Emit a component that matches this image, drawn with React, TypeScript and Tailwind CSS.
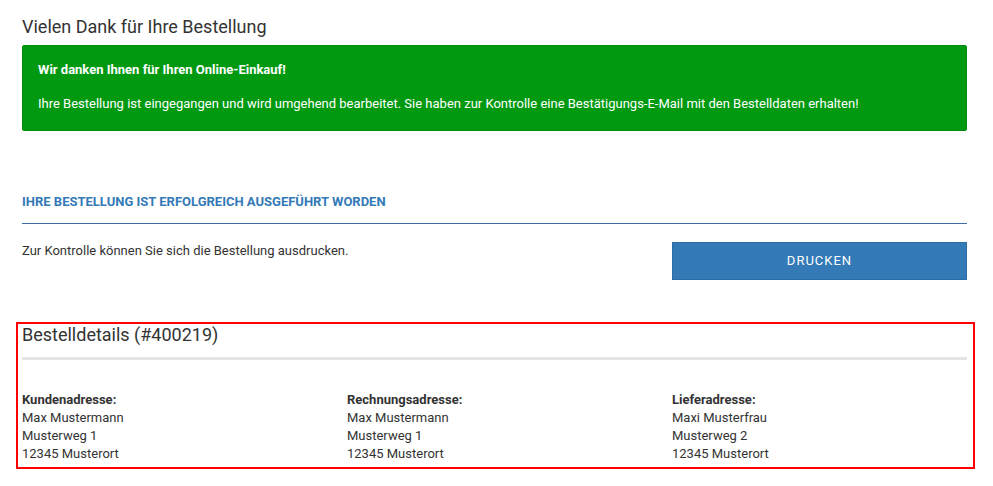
import React from "react";

const Col = ({ label, lines }: { label: string; lines: string[] }) => (
  <div className="text-[13px] leading-[18px] text-[#333]">
    <div className="font-bold">{label}</div>
    {lines.map((l) => (
      <div key={l}>{l}</div>
    ))}
  </div>
);

export default function App() {
  return (
    <div
      className="w-[993px] h-[486px] bg-white text-[#333]"
      style={{ fontFamily: "Roboto, 'Liberation Sans', sans-serif" }}
    >
      <div className="w-[945px] ml-[22px] pt-[17px]">
        <h1 className="text-[18px] leading-[20px] font-normal mb-[8px]">Vielen Dank für Ihre Bestellung</h1>
        <div className="bg-[#00990f] border border-[#008c0d] rounded-[2px] text-white text-[13px] leading-[20px] pt-[14px] pb-[16px] px-[15px]">
          <div className="font-bold">Wir danken Ihnen für Ihren Online-Einkauf!</div>
          <div className="mt-[14px]">
            Ihre Bestellung ist eingegangen und wird umgehend bearbeitet. Sie haben zur Kontrolle eine Bestätigungs-E-Mail mit den Bestelldaten erhalten!
          </div>
        </div>

        <div className="mt-[63px] border-b border-[#3d6ea5] pb-[13px] text-[13px] leading-[16px] font-bold text-[#337ab7]">
          IHRE BESTELLUNG IST ERFOLGREICH AUSGEFÜHRT WORDEN
        </div>

        <div className="mt-[18px] flex justify-between">
          <div className="text-[13px] leading-[18px]">Zur Kontrolle können Sie sich die Bestellung ausdrucken.</div>
          <button className="w-[295px] h-[38px] bg-[#337ab7] border border-[#2e6da4] text-white text-[13px] tracking-[1px]">
            DRUCKEN
          </button>
        </div>
      </div>

      <div className="mt-[42px] ml-[16px] w-[959px] border-2 border-[#ff0000] pt-[1px] pb-[4px] px-[4px]">
        <div className="w-[945px]">
          <div className="text-[18px] leading-[20px]">Bestelldetails (#400219)</div>
          <div className="mt-[12px] h-[3px] bg-[#e5e5e5]" />
          <div className="mt-[31px] grid grid-cols-[325px_325px_1fr]">
            <Col label="Kundenadresse:" lines={["Max Mustermann", "Musterweg 1", "12345 Musterort"]} />
            <Col label="Rechnungsadresse:" lines={["Max Mustermann", "Musterweg 1", "12345 Musterort"]} />
            <Col label="Lieferadresse:" lines={["Maxi Musterfrau", "Musterweg 2", "12345 Musterort"]} />
          </div>
        </div>
      </div>
    </div>
  );
}
